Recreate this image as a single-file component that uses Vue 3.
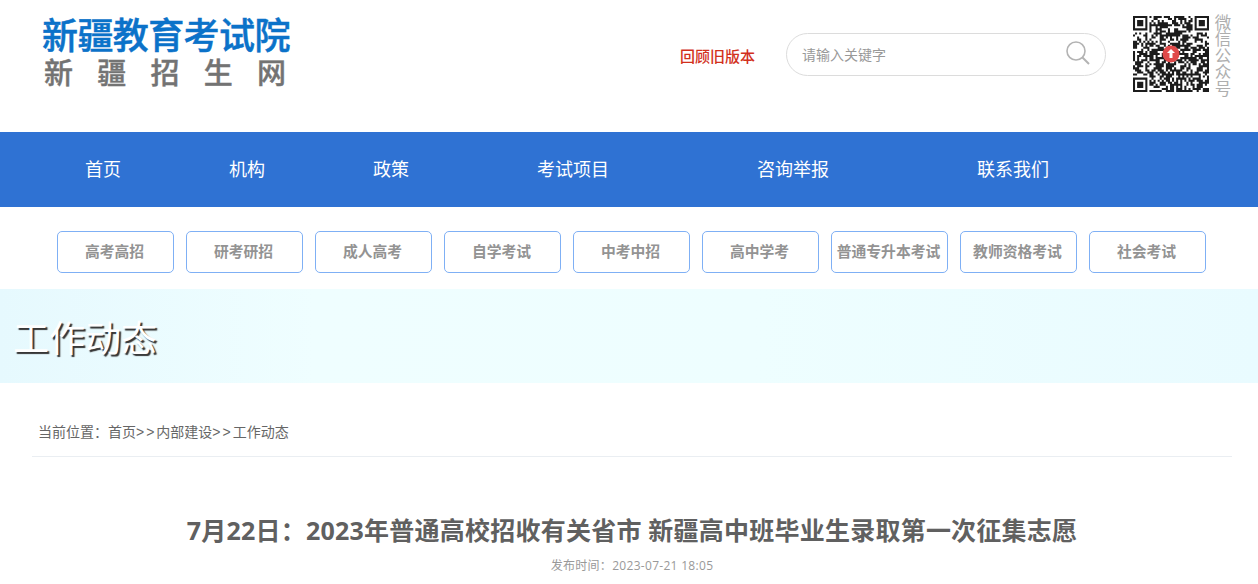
<script setup>
import { computed } from 'vue'

const navItems = [
  { label: '首页', wide: false },
  { label: '机构', wide: false },
  { label: '政策', wide: false },
  { label: '考试项目', wide: true },
  { label: '咨询举报', wide: true },
  { label: '联系我们', wide: true }
]
const tabs = ['高考高招', '研考研招', '成人高考', '自学考试', '中考中招', '高中学考', '普通专升本考试', '教师资格考试', '社会考试']
const logoSub = ['新', '疆', '招', '生', '网']

const size = 37
function nearFinder(x, y) {
  return (x < 8 && y < 8) || (x >= size - 8 && y < 8) || (x < 8 && y >= size - 8)
}
const qrPath = computed(() => {
  let seed = 20230721
  const rand = () => {
    seed = (seed * 1664525 + 1013904223) >>> 0
    return seed / 4294967296
  }
  let d = ''
  for (let y = 0; y < size; y++) {
    for (let x = 0; x < size; x++) {
      const r = rand()
      if (!nearFinder(x, y) && r > 0.44) d += `M${x} ${y}h1v1h-1z`
    }
  }
  const finder = (a, b) => `M${a} ${b}h7v7h-7zM${a + 1} ${b + 1}v5h5v-5zM${a + 2} ${b + 2}h3v3h-3z`
  return d + finder(0, 0) + finder(size - 7, 0) + finder(0, size - 7)
})
</script>

<template>
  <div class="page">
    <header class="header">
      <div class="logo">
        <div class="logo-main">新疆教育考试院</div>
        <div class="logo-sub">
          <span v-for="c in logoSub" :key="c">{{ c }}</span>
        </div>
      </div>
      <a class="old-version">回顾旧版本</a>
      <div class="search">
        <span class="placeholder">请输入关键字</span>
        <svg class="search-icon" viewBox="0 0 24 24" width="24" height="24" fill="none" stroke="#b3b3b3">
          <circle cx="10" cy="10" r="9" stroke-width="1.6" />
          <path d="M16.5 16.5 L23 23" stroke-width="2" />
        </svg>
      </div>
      <div class="qr-box">
        <svg class="qr" :viewBox="`0 0 ${size} ${size}`" width="76" height="76">
          <path :d="qrPath" fill="#1c1c1c" fill-rule="evenodd" />
        </svg>
        <svg class="qr-badge" viewBox="0 0 18 18" width="18" height="18">
          <circle cx="9" cy="9" r="8.5" fill="#e04a4a" />
          <path d="M9 4 L13 8 H10.5 V13 H7.5 V8 H5 Z" fill="#fff" />
        </svg>
      </div>
      <div class="wechat">微信公众号</div>
    </header>

    <nav class="nav">
      <a v-for="n in navItems" :key="n.label" class="nav-item" :class="{ wide: n.wide }">{{ n.label }}</a>
    </nav>

    <div class="tabs">
      <a v-for="t in tabs" :key="t" class="tab">{{ t }}</a>
    </div>

    <div class="banner">
      <h2 class="banner-title">工作动态</h2>
    </div>

    <div class="crumb">当前位置：首页<span class="sep">&gt;&gt;</span>内部建设<span class="sep">&gt;&gt;</span>工作动态</div>

    <article class="article">
      <h1 class="article-title">7月22日：2023年普通高校招收有关省市 新疆高中班毕业生录取第一次征集志愿</h1>
      <div class="article-date">发布时间：2023-07-21 18:05</div>
    </article>
  </div>
</template>

<style>
html, body { margin: 0; background: #fff; overflow: hidden; }
</style>

<style scoped>
.page {
  width: 1258px;
  height: 584px;
  overflow: hidden;
  font-family: "Noto Sans CJK SC", "Liberation Sans", sans-serif;
  background: #fff;
}
.header {
  height: 132px;
  display: flex;
  align-items: flex-start;
  box-sizing: border-box;
}
.logo {
  width: 680px;
  padding: 11px 0 0 42px;
  box-sizing: border-box;
}
.logo-main {
  font-size: 36px;
  line-height: 44px;
  font-weight: 500;
  -webkit-text-stroke: 0.5px #0b72c9;
  color: #0b72c9;
  letter-spacing: -0.6px;
  white-space: nowrap;
}
.logo-sub {
  width: 242px;
  margin: -1px 0 0 2px;
  display: flex;
  justify-content: space-between;
  font-size: 29px;
  line-height: 34px;
  font-weight: 500;
  -webkit-text-stroke: 0.4px #737373;
  color: #737373;
}
.old-version {
  margin-top: 45px;
  width: 106px;
  font-size: 15px;
  line-height: 22px;
  font-weight: 500;
  color: #d2301c;
  white-space: nowrap;
}
.search {
  margin-top: 33px;
  width: 320px;
  height: 43px;
  box-sizing: border-box;
  border: 1px solid #dcdcdc;
  border-radius: 22px;
  display: flex;
  align-items: center;
  justify-content: space-between;
  padding: 0 15px 0 15px;
}
.placeholder {
  font-size: 14px;
  color: #999;
  margin-top: -2px;
}
.search-icon {
  margin-bottom: 3px;
}
.qr-box {
  position: relative;
  margin: 16px 0 0 27px;
  width: 76px;
  height: 76px;
}
.qr {
  display: block;
  filter: blur(0.45px);
}
.qr-badge {
  position: absolute;
  left: 29px;
  top: 29px;
}
.wechat {
  margin: 14px 0 0 5px;
  width: 17px;
  height: 83px;
  writing-mode: vertical-rl;
  font-size: 16.5px;
  line-height: 17px;
  color: #aeaeae;
  white-space: nowrap;
}
.nav {
  height: 75px;
  background: #2f72d3;
  display: flex;
  padding-left: 31px;
}
.nav-item {
  padding: 0 54px;
  font-size: 18px;
  line-height: 73px;
  color: #fff;
  white-space: nowrap;
}
.nav-item.wide {
  padding: 0 74px;
}
.tabs {
  display: flex;
  gap: 12px;
  padding: 24px 0 16px 57px;
}
.tab {
  width: 117px;
  height: 42px;
  box-sizing: border-box;
  border: 1px solid #7fb0f5;
  border-radius: 5px;
  padding: 0 2px 3px 0;
  display: flex;
  align-items: center;
  justify-content: center;
  font-size: 14.8px;
  font-weight: 700;
  color: #939393;
  white-space: nowrap;
}
.banner {
  height: 94px;
  background: linear-gradient(90deg, #e6f9fe 0%, #effeff 25%, #eefeff 60%, #e9fbff 100%);
  display: flex;
  align-items: center;
  padding-left: 13px;
}
.banner-title {
  margin: 0;
  font-size: 36px;
  line-height: 50px;
  font-weight: 400;
  color: #fff;
  text-shadow: 2px 2px 1px #333;
  white-space: nowrap;
}
.crumb {
  margin: 0 26px 0 32px;
  padding: 39px 0 14px 6px;
  border-bottom: 1px solid #eaeef2;
  font-size: 14px;
  line-height: 19px;
  color: #666;
  white-space: nowrap;
}
.sep {
  font-family: "Liberation Sans", sans-serif;
  letter-spacing: 2px;
}
.article {
  padding-top: 53px;
  text-align: center;
  width: 1264px;
}
.article-title {
  margin: 0;
  font-size: 25px;
  line-height: 40px;
  font-weight: 700;
  letter-spacing: 0.23px;
  font-family: "Open Sans", "Noto Sans CJK SC", sans-serif;
  color: #606060;
  white-space: nowrap;
}
.article-date {
  margin-top: 6px;
  font-size: 12px;
  line-height: 20px;
  letter-spacing: 0.3px;
  font-family: "Open Sans", "Noto Sans CJK SC", sans-serif;
  color: #999;
}
</style>
